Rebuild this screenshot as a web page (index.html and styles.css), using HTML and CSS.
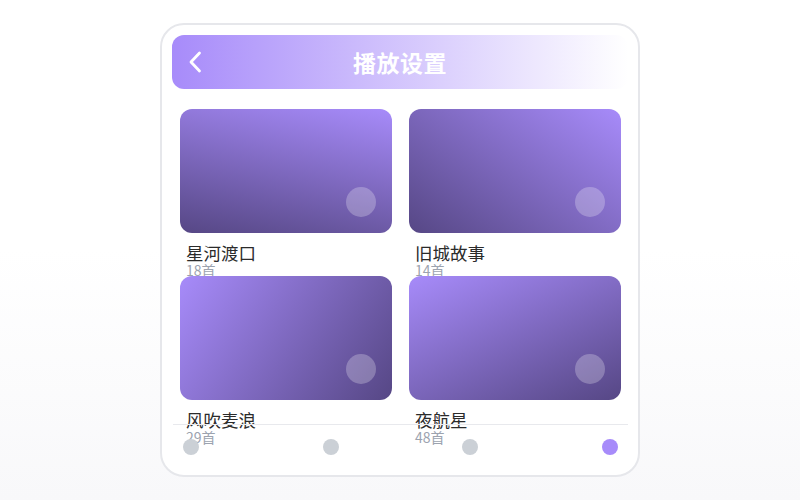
FILE: index.html
```html
<!DOCTYPE html>
<html lang="zh-CN">
<head>
    <meta charset="UTF-8">
    <meta name="viewport" content="width=device-width, initial-scale=1.0">
    <title>播放设置</title>
    <link rel="stylesheet" href="styles.css">
</head>
<body>
    <div class="phone">
        <div class="header">
            <svg class="back" width="14" height="22" viewBox="0 0 14 22">
                <path d="M11.5 2 L3 11 L11.5 20" fill="none" stroke="#fff" stroke-width="2.8" stroke-linecap="round" stroke-linejoin="round"/>
            </svg>
            <h2>播放设置</h2>
        </div>

        <div class="grid">
            <div class="item">
                <div class="cover cover-1"><span class="dot"></span></div>
                <div class="name">星河渡口</div>
                <div class="count">18首</div>
            </div>
            <div class="item">
                <div class="cover cover-2"><span class="dot"></span></div>
                <div class="name">旧城故事</div>
                <div class="count">14首</div>
            </div>
            <div class="item">
                <div class="cover cover-3"><span class="dot"></span></div>
                <div class="name">风吹麦浪</div>
                <div class="count">29首</div>
            </div>
            <div class="item">
                <div class="cover cover-4"><span class="dot"></span></div>
                <div class="name">夜航星</div>
                <div class="count">48首</div>
            </div>
        </div>

        <div class="tabs">
            <span class="tab"></span>
            <span class="tab"></span>
            <span class="tab"></span>
            <span class="tab active"></span>
        </div>
    </div>
</body>
</html>
```

FILE: styles.css
```css
html, body {
    height: 100%;
}
body {
    margin: 0;
    font-family: "Noto Sans CJK SC", "Noto Sans", sans-serif;
    background: linear-gradient(180deg, #ffffff 50%, #f8f8fa);
    display: flex;
    justify-content: center;
    align-items: center;
}
.phone {
    position: relative;
    box-sizing: border-box;
    width: 480px;
    height: 454px;
    padding: 10px;
    background-color: #fff;
    border: 2px solid #e6e7eb;
    border-radius: 24px;
    overflow: hidden;
}
.header {
    position: relative;
    height: 54px;
    border-radius: 12px;
    background: linear-gradient(90deg, #a78bfa, #ffffff);
    display: flex;
    align-items: center;
    justify-content: center;
}
.header .back {
    position: absolute;
    left: 16px;
    top: 16px;
}
.header h2 {
    margin: 0;
    color: #fff;
    font-size: 23px;
    font-weight: 700;
    letter-spacing: 0.5px;
}
.grid {
    display: grid;
    grid-template-columns: 1fr 1fr;
    grid-auto-rows: 160px;
    gap: 7px 17px;
    padding: 0 7px 0 8px;
    margin-top: 20px;
}
.cover {
    position: relative;
    height: 124px;
    border-radius: 12px;
}
.cover-1 {
    background: linear-gradient(192deg, #a78bfa, #564785);
}
.cover-2 {
    background: linear-gradient(215deg, #a78bfa, #564785);
}
.cover-3 {
    background: linear-gradient(125deg, #a78bfa, #564785);
}
.cover-4 {
    background: linear-gradient(155deg, #a78bfa, #564785);
}
.dot {
    position: absolute;
    right: 16px;
    bottom: 16px;
    width: 30px;
    height: 30px;
    border-radius: 50%;
    background-color: rgba(255, 255, 255, 0.25);
}
.name {
    margin-top: 10px;
    padding-left: 6px;
    font-size: 17.5px;
    line-height: 20px;
    color: #2b2b2b;
}
.count {
    padding-left: 6px;
    font-size: 14px;
    line-height: 14px;
    color: #9ca3af;
}
.tabs {
    position: absolute;
    left: 11px;
    right: 10px;
    bottom: 8px;
    padding: 14px 10px 12px;
    border-top: 1px solid #e8e9ed;
    display: flex;
    justify-content: space-between;
}
.tab {
    width: 16px;
    height: 16px;
    border-radius: 50%;
    background-color: #cbd0d6;
}
.tab.active {
    background-color: #a78bfa;
}
```
